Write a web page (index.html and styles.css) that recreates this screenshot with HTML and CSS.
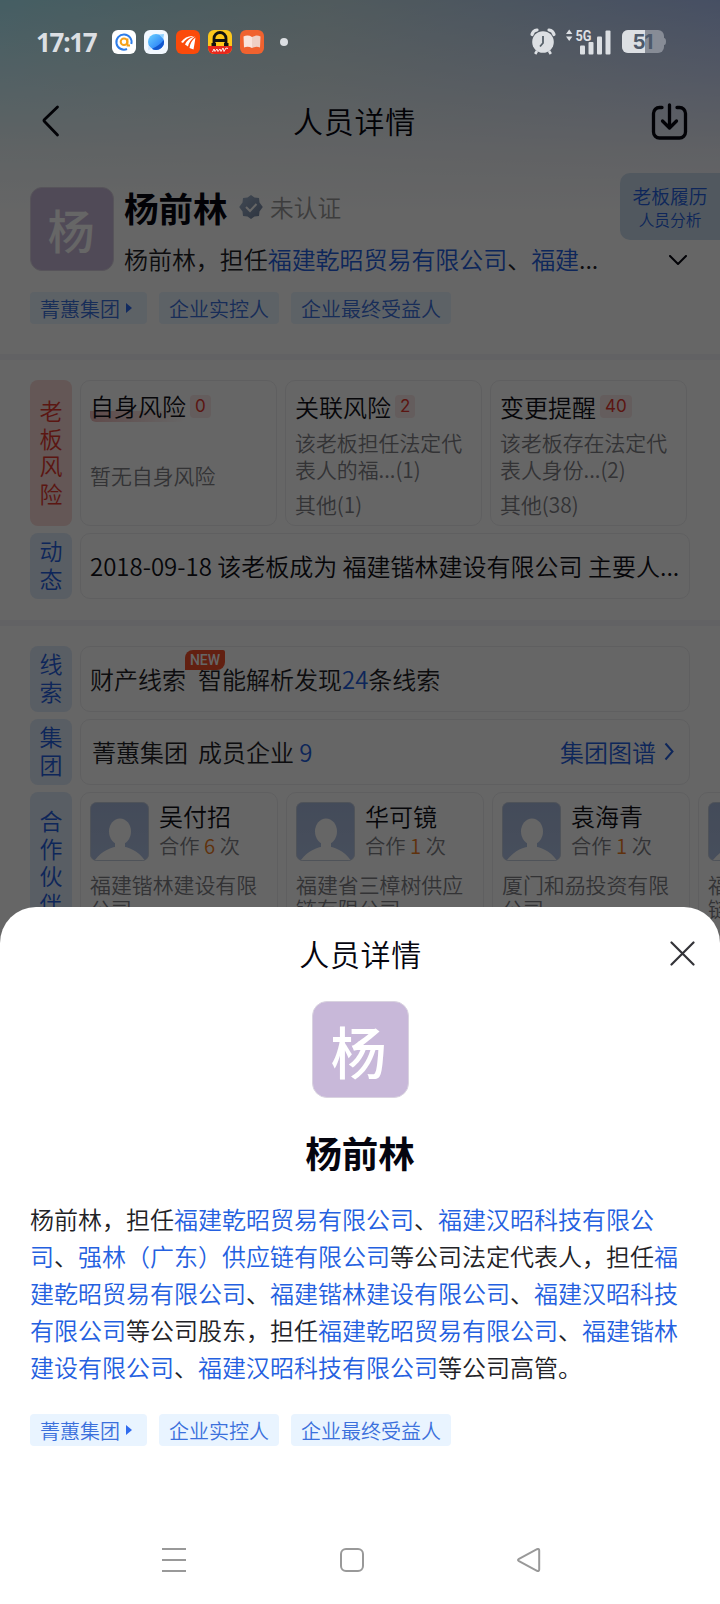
FILE: index.html
```html
<!DOCTYPE html>
<html lang="zh-CN">
<head>
<meta charset="utf-8">
<title>人员详情</title>
<link rel="stylesheet" href="styles.css">
</head>
<body>
<svg width="0" height="0" class="defs">
  <defs>
    <linearGradient id="av" x1="0" y1="0" x2="0" y2="1"><stop offset="0" stop-color="#a9bbdf"/><stop offset="1" stop-color="#b2c4e6"/></linearGradient>
    <linearGradient id="bd" x1="0" y1="0" x2="1" y2="1"><stop offset="0" stop-color="#a3b6cf"/><stop offset="1" stop-color="#71829f"/></linearGradient>
    <linearGradient id="pl" x1="0" y1="0" x2="1" y2="1"><stop offset="0" stop-color="#6bd2ff"/><stop offset="1" stop-color="#1a6cf5"/></linearGradient>
    <symbol id="person" viewBox="0 0 59 59"><rect x=".5" y=".5" width="58" height="58" rx="6" fill="url(#av)" stroke="#c5cfdf"/><ellipse cx="30" cy="29.500" rx="11" ry="13" fill="#fff"/><path d="M25 40h10v5h-10zM5 58C12 49 21 44.500 30 44.500S48 49 54.500 58z" fill="#fff"/></symbol>
  </defs>
</svg>
<div class="phone">
  <header class="status">
    <span class="time">17:17</span>
    <div class="apps">
      <svg width="24" height="24"><rect width="24" height="24" rx="6" fill="#fff"/><path d="M15 19A7.600 7.600 0 1 1 19.300 14" fill="none" stroke="#2f7de8" stroke-width="2"/><circle cx="12" cy="11.800" r="3.300" fill="none" stroke="#f6a21c" stroke-width="2"/><path d="M15.500 8.500v7h2.500" fill="none" stroke="#f6a21c" stroke-width="1.800"/></svg>
      <svg width="24" height="24"><rect width="24" height="24" rx="6" fill="#f2f8ff"/><circle cx="12" cy="12" r="8" fill="url(#pl)"/><path d="M15 4.600L20 4l-.700 5z" fill="#8fd0ff"/><path d="M8 18.800Q15.500 15.500 19.800 10A8 8 0 0 1 8 18.800z" fill="#1257cf"/><path d="M4.500 15.500L4 20l4.500-1z" fill="#cfe6ff"/></svg>
      <svg width="24" height="24"><rect width="24" height="24" rx="6" fill="#fb4a0a"/><path d="M5 12Q10 5 18 6Q10 8 7 13zM9 14.500Q12 8 19 6.500Q13 11 12 16.500zM13.500 18Q14.500 11 19.500 7.500Q18.500 14 17.500 19.500z" fill="#fff"/></svg>
      <svg width="24" height="24"><rect width="24" height="24" rx="6" fill="#fdc71b"/><path d="M0 16h24v2a6 6 0 0 1-6 6H6a6 6 0 0 1-6-6z" fill="#e8281c"/><path d="M6 15V8.500a6 6 0 0 1 12 0V15M6 10.500h12M3.500 14.500H8M16 14.500h4.500" fill="none" stroke="#111" stroke-width="2.800"/><path d="M4.500 22l1.500-3 1 2.500 2-2.500 1 2.500 2-2.500 1 2.500 2-3.500 1 3.500 2-3.500 2 .500" fill="none" stroke="#fff" stroke-width=".9"/></svg>
      <svg width="24" height="24"><rect width="24" height="24" rx="6" fill="#f0622f"/><path d="M3.500 6.500Q8 4.500 12 7v11Q8 16 4 17.500z" fill="#f9e4dc"/><path d="M20.500 6.500Q16 4.500 12 7v11Q16 16 20 17.500z" fill="#efd0c5"/></svg>
    </div>
    <i class="dot"></i>
    <div class="signals">
      <svg width="26" height="27" viewBox="0 0 26 27" fill="none" stroke="#dcdfe3"><circle cx="13" cy="14" r="10.800" fill="#dcdfe3" stroke="none"/><path d="M2 6.500Q3 2.500 7 2M24 6.500Q23 2.500 19 2" stroke-width="3.200" stroke-linecap="round"/><path d="M7 23l-1.800 3M19 23l1.800 3" stroke-width="2.600"/><path d="M13 8v7l-3 3.500" stroke="#566069" stroke-width="1.800"/></svg>
      <svg class="cell" width="46" height="26" viewBox="0 0 46 26" fill="#dcdfe3"><path d="M0 5l3.200-4.500L6.400 5zM0 7.500h6.400L3.200 12z"/><text x="9.500" y="11.500" textLength="16" lengthAdjust="spacingAndGlyphs">5G</text><rect x="14" y="16.500" width="5" height="9" rx="1"/><rect x="22.500" y="13" width="5" height="12.500" rx="1"/><rect x="31" y="7.500" width="5" height="18" rx="1"/><rect x="39.500" y="1.500" width="5" height="24" rx="1"/></svg>
      <svg class="batt" width="44" height="23" viewBox="0 0 44 23"><rect width="42" height="23" rx="6" fill="#878c96"/><path d="M42 8q2 0 2 3.500T42 15z" fill="#878c96"/><path d="M6 0h17v23H6a6 6 0 0 1-6-6V6a6 6 0 0 1 6-6z" fill="#dcdfe3"/><text x="10.500" y="19">51</text></svg>
    </div>
  </header>

  <main class="page">
    <nav class="nav">
      <svg width="20" height="32" viewBox="0 0 20 32"><path d="M16.500 2L3.500 14.500q-1 1 0 2L16.500 30" class="ln w3"/></svg>
      <h1>人员详情</h1>
      <svg width="37" height="38" viewBox="0 0 37 38"><path d="M11 5.500H8.500a6 6 0 0 0-6 6V30a6 6 0 0 0 6 6h20a6 6 0 0 0 6-6V11.500a6 6 0 0 0-6-6H26M18.500 3v23M11.500 19l7 7 7-7" class="ln w4"/></svg>
    </nav>

    <section class="profile">
      <div class="face small">杨</div>
      <div class="who">
        <div class="nameline"><b>杨前林</b>
          <svg width="24" height="24" viewBox="0 0 24 24"><path d="M12 0l3.500 2.500 4.500.500.500 4.500L23.800 12l-3.300 4.500-.500 4.500-4.500.500L12 24l-3.500-2.500L4 21l-.500-4.500L.200 12l3.300-4.500L4 3l4.500-.500z" fill="url(#bd)"/><path d="M7 12l4 4 6.500-7" fill="none" stroke="#fff" stroke-width="2"/></svg>
          <span>未认证</span></div>
        <div class="desc"><span>杨前林，担任<a>福建乾昭贸易有限公司</a>、<a>福建</a>...</span>
          <svg width="18" height="11" viewBox="0 0 18 11"><path d="M1 1l8 8 8-8" class="ln w2"/></svg></div>
      </div>
      <div class="resume"><span>老板履历</span><small>人员分析</small></div>
    </section>
    <div class="tags"><span>菁蕙集团<i></i></span><span>企业实控人</span><span>企业最终受益人</span></div>
    <hr>

    <section class="group risks">
      <div class="row tall">
        <div class="side red">老<br>板<br>风<br>险</div>
        <div class="card risk"><h3><u>自身风险</u><em>0</em></h3><p class="none">暂无自身风险</p></div>
        <div class="card risk"><h3>关联风险<em>2</em></h3><p>该老板担任法定代<br>表人的福...(1)</p><p class="other">其他(1)</p></div>
        <div class="card risk"><h3>变更提醒<em>40</em></h3><p>该老板存在法定代<br>表人身份...(2)</p><p class="other">其他(38)</p></div>
      </div>
      <div class="row">
        <div class="side">动<br>态</div>
        <div class="card wide ink">2018-09-18 该老板成为 福建锴林建设有限公司 主要人...</div>
      </div>
    </section>
    <hr>

    <section class="group clues">
      <div class="row">
        <div class="side">线<br>索</div>
        <div class="card wide"><span class="asset">财产线索<sup>NEW</sup></span>智能解析发现<a>24</a>条线索</div>
      </div>
      <div class="row">
        <div class="side">集<br>团</div>
        <div class="card wide team"><span>菁蕙集团</span><span class="cnt">成员企业 <a>9</a></span><a class="map">集团图谱<svg width="10" height="19" viewBox="0 0 10 19"><path d="M1.500 1.500l7 8-7 8" fill="none" stroke="currentColor" stroke-width="2"/></svg></a></div>
      </div>
      <div class="row partners">
        <div class="side">合<br>作<br>伙<br>伴</div>
        <div class="card mate"><svg width="59" height="59"><use href="#person"/></svg><div><h3>吴付招</h3><p>合作 <em>6</em> 次</p></div><p class="co">福建锴林建设有限<br>公司</p></div>
        <div class="card mate"><svg width="59" height="59"><use href="#person"/></svg><div><h3>华可镜</h3><p>合作 <em>1</em> 次</p></div><p class="co">福建省三樟树供应<br>链有限公司</p></div>
        <div class="card mate"><svg width="59" height="59"><use href="#person"/></svg><div><h3>袁海青</h3><p>合作 <em>1</em> 次</p></div><p class="co">厦门和刕投资有限<br>公司</p></div>
        <div class="card mate"><svg width="59" height="59"><use href="#person"/></svg><div></div><p class="co">福<br>链</p></div>
      </div>
    </section>
  </main>

  <div class="mask"></div>

  <section class="sheet">
    <div class="sheethead"><h2>人员详情</h2>
      <svg width="25" height="25" viewBox="0 0 25 25"><path d="M1.500 1.500l22 22M23.500 1.500l-22 22" fill="none" stroke="#333338" stroke-width="2.200" stroke-linecap="round"/></svg></div>
    <div class="face big">杨</div>
    <h2 class="fullname">杨前林</h2>
    <p class="bio">杨前林，担任<a>福建乾昭贸易有限公司</a>、<a>福建汉昭科技有限公<br>司</a>、<a>强林（广东）供应链有限公司</a>等公司法定代表人，担任<a>福<br>建乾昭贸易有限公司</a>、<a>福建锴林建设有限公司</a>、<a>福建汉昭科技<br>有限公司</a>等公司股东，担任<a>福建乾昭贸易有限公司</a>、<a>福建锴林<br>建设有限公司</a>、<a>福建汉昭科技有限公司</a>等公司高管。</p>
    <div class="tags"><span>菁蕙集团<i></i></span><span>企业实控人</span><span>企业最终受益人</span></div>
    <footer class="keys">
      <svg width="24" height="24" viewBox="0 0 24 24"><path d="M0 1h24M0 12h24M0 23h24"/></svg>
      <svg width="24" height="24" viewBox="0 0 24 24"><rect x="1" y="1" width="22" height="22" rx="5"/></svg>
      <svg width="24" height="24" viewBox="0 0 24 24"><path d="M2 10.800L20 1.200q2.200-.800 2.200 1.300v19q0 2.100-2.200 1.300L2 13.200q-2-1.200 0-2.400z"/></svg>
    </footer>
  </section>
</div>
</body>
</html>
```

FILE: styles.css
```css
* { box-sizing: border-box; margin: 0; padding: 0; }
body { background: #fff; font-family: "Noto Sans CJK SC", sans-serif; font-size: 24px; font-weight: 350; color: #222226; }
h1, h2, h3 { font-weight: 350; }
i, em, u, a { font-style: normal; text-decoration: none; }
a { color: #2460e0; }
svg { display: block; flex: none; }
.defs { position: absolute; }
.phone { position: relative; width: 720px; height: 1604px; overflow: hidden; white-space: nowrap; }

/* status bar, drawn above the mask */
.status { position: absolute; z-index: 3; top: 0; left: 0; width: 720px; height: 82px; display: flex; align-items: center; padding: 2px 54px 0 36px; }
.time { width: 76px; font: 700 26px/30px "Noto Sans", sans-serif; letter-spacing: -1.3px; color: #dcdfe3; margin-top: -1px; }
.apps { display: flex; gap: 8px; }
.dot { width: 8px; height: 8px; border-radius: 50%; background: #dcdfe3; margin-left: 16px; }
.signals { display: flex; align-items: center; margin-left: auto; margin-top: -1px; }
.cell { margin-left: 10px; }
.cell text { font: 700 14px Roboto, sans-serif; }
.batt { margin-left: 10px; }
.batt text { font: 700 20.500px Inter, sans-serif; letter-spacing: -1px; fill: #4d596a; }

/* page below the mask */
.page { height: 1604px; background: linear-gradient(180deg, rgba(255,255,255,0) 0, rgba(250,250,252,.85) 150px, #fff 215px), linear-gradient(90deg, #acebf8 0, #c8e2e8 45%, #b0c6f8 100%); }
.ln { fill: none; stroke: #05050f; stroke-linecap: round; stroke-linejoin: round; }
.w2 { stroke-width: 2; }
.w3 { stroke-width: 2.800; }
.w4 { stroke-width: 3.300; }
.nav { display: flex; align-items: center; justify-content: space-between; height: 160px; padding: 82px 32px 0 41px; }
.nav h1 { margin: -2px 3px 0 0; color: #05050f; }
h1, .sheethead h2 { font-size: 30px; letter-spacing: .7px; line-height: 40px; }

.face { display: flex; align-items: center; justify-content: center; background: #c8b8d9; border: 1px solid #d9d3e0; color: #fff; font-weight: 500; flex: none; }
.small { width: 84px; height: 84px; border-radius: 12px; font-size: 47px; padding: 0 2px 2px 0; }
.profile { display: flex; height: 132px; padding: 27px 0 0 30px; position: relative; }
.who { margin-left: 10px; flex: 1; }
.nameline { display: flex; align-items: center; height: 42px; margin-top: -1px; color: #999; font-size: 23.700px; }
.nameline b { width: 115px; font-size: 34.500px; line-height: 40px; margin-top: -1px; color: #05050f; }
.nameline span { margin-left: 7px; line-height: 32px; }
.desc { display: flex; align-items: center; justify-content: space-between; height: 34px; margin-top: 14px; padding-right: 33px; }
.desc span { letter-spacing: -.05px; margin-top: -1px; }
.desc svg { margin-top: 3px; }
.resume { position: absolute; right: 0; top: 13px; width: 100px; height: 67px; border-radius: 10px 0 0 10px; background: #cadced; color: #2460e0; display: flex; flex-direction: column; align-items: center; padding-top: 10px; font-size: 18.800px; line-height: 26px; }
.resume small { font-size: 15.700px; line-height: 22px; }
.tags { display: flex; gap: 12px; padding-left: 30px; }
.tags span { display: flex; align-items: center; height: 32px; padding: 0 10px; border-radius: 4px; background: #e9f4ff; color: #3b70dc; font-size: 20px; }
.tags i { margin-left: 6px; margin-right: 5px; border: 5px solid transparent; border-left: 6px solid #2f6bef; border-right: 0; }
hr { border: 0; height: 6px; background: #f4f4fa; }
.page > .tags { margin-bottom: 30px; }

.group { display: flex; flex-direction: column; gap: 7px; padding-left: 30px; }
.risks { padding-top: 20px; height: 260px; }
.clues { padding-top: 20px; }
.row { display: flex; gap: 8px; height: 66px; }
.tall { height: 146px; }
.partners { height: 147px; }
.side { width: 42px; flex: none; border-radius: 8px; background: #dfeaf9; color: #2460e0; font-size: 23px; line-height: 27.500px; padding-top: 4px; text-align: center; }
.red { background: #fad9d6; color: #e4372f; }
.tall .side { padding-top: 17px; }
.partners .side { padding-top: 15px; }
.card { flex: none; border: 1px solid #eeeef1; border-radius: 10px; background: #fff; }
.wide { width: 610px; display: flex; align-items: center; padding: 0 10px 2px 9px; }
.ink { color: #101018; }
.risk { width: 197px; padding: 7px 0 0 9px; color: #808086; font-size: 20.900px; line-height: 27px; }
.risk h3 { display: flex; align-items: center; height: 36px; font-size: 24px; color: #101018; }
.risk em { margin-left: 4px; padding: 0 5px; height: 23px; line-height: 23px; border-radius: 4px; background: #fbe8e8; color: #e4372f; font: 400 17px/23px Inter, sans-serif; }
.risk u { background: linear-gradient(90deg, #f0bcbc, rgba(255,255,255,0)) 0 100% / 100% 11px no-repeat; border-radius: 6px; line-height: 32px; }
.risk p { margin-top: 5px; }
.risk .none { margin-top: 38px; }
.risk .other { margin-top: 8px; }
.asset { position: relative; width: 108px; }
.asset sup { position: absolute; left: 95px; top: -11px; width: 40px; height: 20px; border-radius: 8px 2px 8px 0; background: #f4502c; color: #fff; font: 500 14px/20px Roboto, sans-serif; text-align: center; }
.team { padding-left: 11px; }
.cnt { margin-left: 10px; }
.map { display: flex; align-items: center; gap: 8px; margin-left: auto; padding-right: 5px; }
.mate { width: 198px; display: grid; grid-template-columns: 69px 1fr; grid-template-rows: 70px 1fr; padding: 9px 0 0 9px; font-size: 20.900px; color: #808086; overflow: hidden; }
.mate h3 { font-size: 24px; line-height: 27px; color: #101018; }
.mate p { line-height: 33px; font-size: 20.300px; }
.mate em { color: #f07d22; }
.mate .co { grid-column: 1 / 3; line-height: 24px; font-size: 20.900px; }

.mask { position: absolute; inset: 0; background: rgba(0,0,0,.6); z-index: 1; }

/* bottom sheet */
.sheet { position: absolute; z-index: 2; left: 0; top: 907px; width: 720px; height: 697px; border-radius: 36px 36px 0 0; background: #fff; }
.sheethead { display: flex; align-items: center; justify-content: flex-end; height: 94px; padding: 0 25px 2px 0; color: #05050f; }
.sheethead h2 { margin-right: 248px; }
.big { width: 97px; height: 97px; margin: 0 auto; border-radius: 15px; font-size: 56px; padding-right: 3px; }
.fullname { margin-top: 30px; line-height: 50px; text-align: center; font-size: 36.500px; font-weight: 700; color: #05050f; }
.bio { padding: 22px 30px 0; line-height: 37px; }
.sheet .tags { margin-top: 29px; }
.keys { display: flex; justify-content: space-between; padding: 102px 179px 0 162px; }
.keys svg { fill: none; stroke: #999; stroke-width: 2; }
```
